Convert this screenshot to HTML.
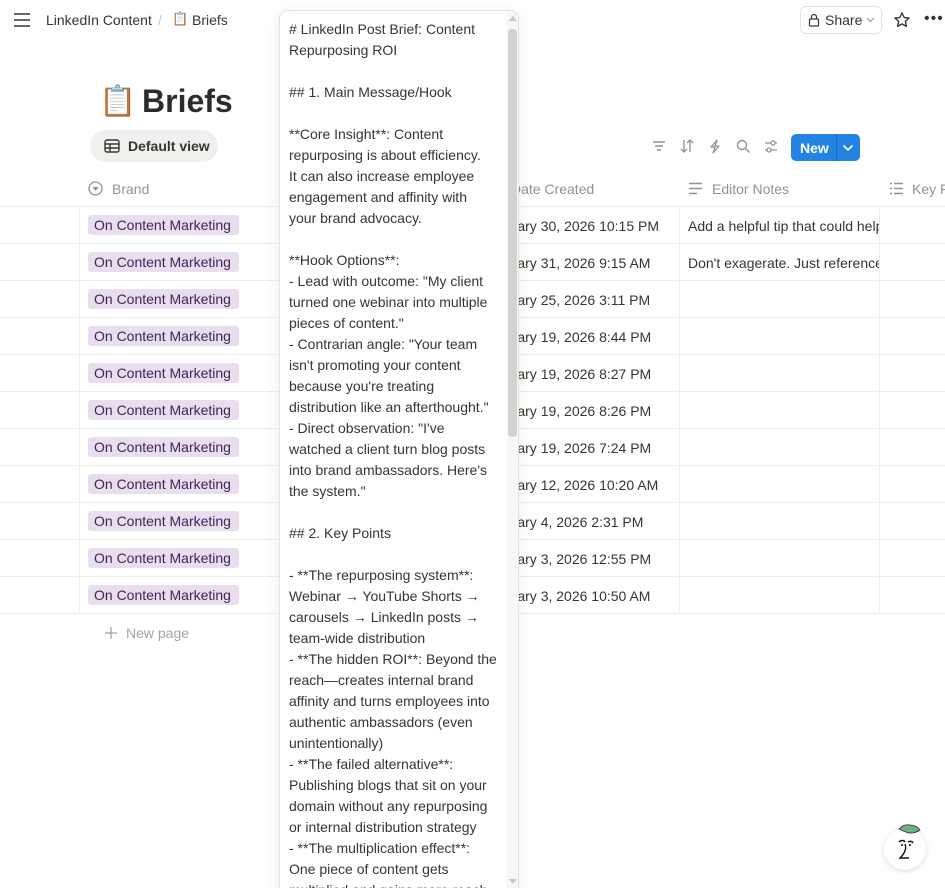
<!DOCTYPE html>
<html><head><meta charset="utf-8">
<style>
*{box-sizing:border-box;margin:0;padding:0}
html,body{width:945px;height:888px;overflow:hidden}
body{background:#fff;font-family:"Liberation Sans",sans-serif;color:#37352f;position:relative}
.a{position:absolute}
.hl{position:absolute;left:0;width:945px;height:1px;background:#ededec}
.vl{position:absolute;width:1px;background:#ededec}
.tag{position:absolute;left:88px;width:151px;height:20px;background:#e8deee;border-radius:3px;color:#412454;font-size:14px;line-height:20px;padding-left:6px}
.cell{position:absolute;font-size:14px;line-height:20px;white-space:nowrap}
.hd{position:absolute;top:181px;font-size:14px;color:#91918e;line-height:16px;white-space:nowrap}
#pop{position:absolute;left:279px;top:10px;width:240px;height:890px;background:#fff;border:1px solid #e3e2e0;border-radius:8px;box-shadow:0 4px 14px rgba(0,0,0,.08);overflow:hidden}
#pop .txt{position:absolute;left:9px;top:8px;width:215px;font-size:14px;line-height:21px;color:#37352f;white-space:pre;overflow:hidden}
</style></head><body>
<svg class="a" style="left:13px;top:12px" width="18" height="16" viewBox="0 0 18 16"><path d="M1 2h16M1 8h16M1 14h16" stroke="#37352f" stroke-width="1.6"/></svg>
<div class="a" style="left:46px;top:12px;font-size:14px">LinkedIn Content</div>
<div class="a" style="left:158px;top:12px;font-size:14px;color:#c7c6c4">/</div>
<div class="a" style="left:172px;top:11px;font-size:13px">📋</div>
<div class="a" style="left:192px;top:12px;font-size:14px">Briefs</div>
<div class="a" style="left:800px;top:6px;width:82px;height:28px;border:1px solid #e3e2e0;border-radius:6px"></div>
<svg class="a" style="left:808px;top:13px" width="12" height="14" viewBox="0 0 12 14"><rect x="1.5" y="6" width="9" height="7" rx="1" fill="none" stroke="#37352f" stroke-width="1.2"/><path d="M3.5 6V4a2.5 2.5 0 015 0v2" fill="none" stroke="#37352f" stroke-width="1.2"/></svg>
<div class="a" style="left:825px;top:12px;font-size:14px">Share</div>
<svg class="a" style="left:866px;top:17px" width="9" height="6"><path d="M1 1l3.5 3.5L8 1" fill="none" stroke="#91918e"/></svg>
<svg class="a" style="left:893px;top:11px" width="18" height="18" viewBox="0 0 24 24"><path d="M12 2.5l2.9 6.2 6.6.7-5 4.5 1.4 6.6L12 17.2l-5.9 3.3 1.4-6.6-5-4.5 6.6-.7z" fill="none" stroke="#37352f" stroke-width="1.8" stroke-linejoin="round"/></svg>
<div class="a" style="left:924px;top:10px;font-size:16px;letter-spacing:1px">•••</div>
<div class="a" style="left:99px;top:84px;font-size:30px">📋</div>
<div class="a" style="left:142px;top:83px;font-size:32px;font-weight:bold;color:#2c2c2b">Briefs</div>
<div class="a" style="left:90px;top:130px;width:128px;height:32px;background:#f1f0ef;border-radius:16px"></div>
<svg class="a" style="left:104px;top:139px" width="16" height="14" viewBox="0 0 16 14"><rect x="1" y="1" width="14" height="12" rx="2" fill="none" stroke="#37352f" stroke-width="1.4"/><path d="M1 5h14M1 9h14M6 5v8" stroke="#37352f" stroke-width="1.4"/></svg>
<div class="a" style="left:128px;top:138px;font-size:14px;font-weight:bold;color:#37352f">Default view</div>
<svg class="a" style="left:652px;top:140px" width="14" height="12"><path d="M1 2h12M3 6h8M5 10h4" stroke="#91918e" stroke-width="1.4"/></svg>
<svg class="a" style="left:680px;top:139px" width="14" height="14"><path d="M4 1v12M1 10l3 3 3-3M10 13V1M7 4l3-3 3 3" fill="none" stroke="#91918e" stroke-width="1.3"/></svg>
<svg class="a" style="left:709px;top:139px" width="12" height="15"><path d="M8 1L2 8h4l-2 6 6-7H6z" fill="none" stroke="#91918e" stroke-width="1.3" stroke-linejoin="round"/></svg>
<svg class="a" style="left:736px;top:139px" width="15" height="15"><circle cx="6" cy="6" r="4.5" fill="none" stroke="#91918e" stroke-width="1.4"/><path d="M9.5 9.5l4 4" stroke="#91918e" stroke-width="1.4"/></svg>
<svg class="a" style="left:764px;top:140px" width="14" height="13"><path d="M1 3h12M1 10h12" stroke="#91918e" stroke-width="1.3"/><circle cx="9" cy="3" r="2" fill="#fff" stroke="#91918e" stroke-width="1.3"/><circle cx="5" cy="10" r="2" fill="#fff" stroke="#91918e" stroke-width="1.3"/></svg>
<div class="a" style="left:791px;top:134px;width:69px;height:27px;background:#2383e2;border-radius:5px"></div>
<div class="a" style="left:836px;top:134px;width:1px;height:27px;background:#1b6cbd"></div>
<div class="a" style="left:800px;top:140px;font-size:14px;font-weight:bold;color:#fff">New</div>
<svg class="a" style="left:842px;top:144px" width="12" height="8"><path d="M1.5 1.5L6 6l4.5-4.5" fill="none" stroke="#fff" stroke-width="1.6"/></svg>
<svg class="a" style="left:88px;top:181px" width="15" height="15"><circle cx="7.5" cy="7.5" r="6.5" fill="none" stroke="#91918e" stroke-width="1.3"/><path d="M4.5 6h6L7.5 10z" fill="#91918e"/></svg>
<div class="hd" style="left:112px">Brand</div>
<div class="hd" style="left:511px">Date Created</div>
<svg class="a" style="left:688px;top:182px" width="15" height="13"><path d="M1 1.5h13M1 6.5h13M1 11.5h8" stroke="#91918e" stroke-width="1.5"/></svg>
<div class="hd" style="left:712px">Editor Notes</div>
<svg class="a" style="left:889px;top:182px" width="15" height="13"><path d="M1 1.5h2M1 6.5h2M1 11.5h2M5 1.5h9M5 6.5h9M5 11.5h9" stroke="#91918e" stroke-width="1.5"/></svg>
<div class="hd" style="left:912px">Key P</div>
<div class="hl" style="top:206px"></div>
<div class="hl" style="top:243px"></div><div class="hl" style="top:280px"></div><div class="hl" style="top:317px"></div><div class="hl" style="top:354px"></div><div class="hl" style="top:391px"></div><div class="hl" style="top:428px"></div><div class="hl" style="top:465px"></div><div class="hl" style="top:502px"></div><div class="hl" style="top:539px"></div><div class="hl" style="top:576px"></div><div class="hl" style="top:613px"></div>
<div class="vl" style="left:79px;top:207px;height:406px"></div>
<div class="vl" style="left:679px;top:207px;height:406px"></div>
<div class="vl" style="left:879px;top:207px;height:406px"></div>
<div class="tag" style="top:215px">On Content Marketing</div>
<div class="tag" style="top:252px">On Content Marketing</div>
<div class="tag" style="top:289px">On Content Marketing</div>
<div class="tag" style="top:326px">On Content Marketing</div>
<div class="tag" style="top:363px">On Content Marketing</div>
<div class="tag" style="top:400px">On Content Marketing</div>
<div class="tag" style="top:437px">On Content Marketing</div>
<div class="tag" style="top:474px">On Content Marketing</div>
<div class="tag" style="top:511px">On Content Marketing</div>
<div class="tag" style="top:548px">On Content Marketing</div>
<div class="tag" style="top:585px">On Content Marketing</div>
<div class="cell" style="left:487px;top:216px">January 30, 2026 10:15 PM</div>
<div class="cell" style="left:487px;top:253px">January 31, 2026 9:15 AM</div>
<div class="cell" style="left:487px;top:290px">January 25, 2026 3:11 PM</div>
<div class="cell" style="left:487px;top:327px">January 19, 2026 8:44 PM</div>
<div class="cell" style="left:487px;top:364px">January 19, 2026 8:27 PM</div>
<div class="cell" style="left:487px;top:401px">January 19, 2026 8:26 PM</div>
<div class="cell" style="left:487px;top:438px">January 19, 2026 7:24 PM</div>
<div class="cell" style="left:487px;top:475px">January 12, 2026 10:20 AM</div>
<div class="cell" style="left:487px;top:512px">January 4, 2026 2:31 PM</div>
<div class="cell" style="left:487px;top:549px">January 3, 2026 12:55 PM</div>
<div class="cell" style="left:487px;top:586px">January 3, 2026 10:50 AM</div>
<div class="cell" style="left:688px;top:216px;width:191px;overflow:hidden">Add a helpful tip that could help</div>
<div class="cell" style="left:688px;top:253px;width:191px;overflow:hidden">Don't exagerate. Just reference</div>
<svg class="a" style="left:105px;top:627px" width="12" height="12"><path d="M6 0v12M0 6h12" stroke="#a5a4a1" stroke-width="1.3"/></svg>
<div class="a" style="left:126px;top:625px;font-size:14px;color:#a5a4a1">New page</div>
<div id="pop">
<div class="txt"># LinkedIn Post Brief: Content
Repurposing ROI

## 1. Main Message/Hook

**Core Insight**: Content
repurposing is about efficiency.
It can also increase employee
engagement and affinity with
your brand advocacy.

**Hook Options**:
- Lead with outcome: "My client
turned one webinar into multiple
pieces of content."
- Contrarian angle: "Your team
isn't promoting your content
because you're treating
distribution like an afterthought."
- Direct observation: "I've
watched a client turn blog posts
into brand ambassadors. Here's
the system."

## 2. Key Points

- **The repurposing system**:
Webinar → YouTube Shorts →
carousels → LinkedIn posts →
team-wide distribution
- **The hidden ROI**: Beyond the
reach—creates internal brand
affinity and turns employees into
authentic ambassadors (even
unintentionally)
- **The failed alternative**:
Publishing blogs that sit on your
domain without any repurposing
or internal distribution strategy
- **The multiplication effect**:
One piece of content gets
multiplied and gains more reach</div>
<div class="a" style="left:227px;top:0;width:12px;height:890px;background:#f7f7f6"></div>
<div class="a" style="left:228px;top:18px;width:9px;height:408px;background:#d3d2ce;border-radius:4px"></div>
<svg class="a" style="left:228px;top:4px" width="10" height="7"><path d="M1 6L5 1l4 5z" fill="#c7c6c4"/></svg>
<svg class="a" style="left:228px;top:867px" width="10" height="7"><path d="M1 1l4 5 4-5z" fill="#c7c6c4"/></svg>
</div>
<div class="a" style="left:884px;top:828px;width:42px;height:42px;border-radius:50%;background:#fff;box-shadow:0 1px 6px rgba(0,0,0,.15)"></div>
<svg class="a" style="left:897px;top:822px" width="26" height="14"><path d="M2 7c3-3 6-5 11-4 4 0 8 2 10 5-4 3-10 4-14 2C6 9 4 8 2 7z" fill="#6fae86" stroke="#2d2d2d" stroke-width=".8"/></svg>
<svg class="a" style="left:896px;top:838px" width="22" height="24"><path d="M3 4c2-2 5-2 6 0M12 4c2-1 4-1 5 1M9 6c2 5-1 10-5 14h9" fill="none" stroke="#111" stroke-width="1.4"/><circle cx="6" cy="7" r="1" fill="#111"/><circle cx="14" cy="7" r="1" fill="#111"/></svg>
</body></html>
